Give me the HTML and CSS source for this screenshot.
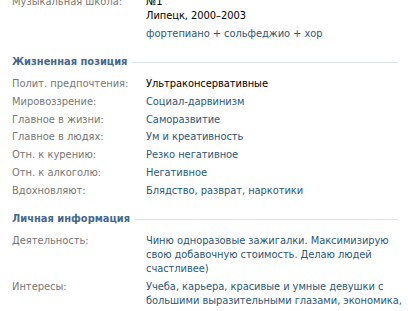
FILE: index.html
```html
<!DOCTYPE html>
<html lang="ru">
<head>
  <meta charset="UTF-8" />
  <title>Профиль</title>
  <link rel="stylesheet" href="styles.css">
</head>
<body>
  <div class="profile-info">

    <div class="info-row first">
      <div class="label">Музыкальная школа:</div>
      <div class="value">
        <div class="plain">№1</div>
        <div class="plain">Липецк, 2000–2003</div>
      </div>
    </div>
    <div class="info-row">
      <div class="label"></div>
      <div class="value"><a href="#">фортепиано + сольфеджио + хор</a></div>
    </div>

    <h3 class="section-title"><span>Жизненная позиция</span></h3>

    <div class="info-row">
      <div class="label">Полит. предпочтения:</div>
      <div class="value plain">Ультраконсервативные</div>
    </div>
    <div class="info-row">
      <div class="label">Мировоззрение:</div>
      <div class="value"><a href="#">Социал-дарвинизм</a></div>
    </div>
    <div class="info-row">
      <div class="label">Главное в жизни:</div>
      <div class="value"><a href="#">Саморазвитие</a></div>
    </div>
    <div class="info-row">
      <div class="label">Главное в людях:</div>
      <div class="value"><a href="#">Ум и креативность</a></div>
    </div>
    <div class="info-row">
      <div class="label">Отн. к курению:</div>
      <div class="value"><a href="#">Резко негативное</a></div>
    </div>
    <div class="info-row">
      <div class="label">Отн. к алкоголю:</div>
      <div class="value"><a href="#">Негативное</a></div>
    </div>
    <div class="info-row">
      <div class="label">Вдохновляют:</div>
      <div class="value"><a href="#">Блядство, разврат, наркотики</a></div>
    </div>

    <h3 class="section-title"><span>Личная информация</span></h3>

    <div class="info-row">
      <div class="label">Деятельность:</div>
      <div class="value"><a href="#">Чиню одноразовые зажигалки. Максимизирую свою добавочную стоимость. Делаю людей счастливее)</a></div>
    </div>
    <div class="info-row">
      <div class="label">Интересы:</div>
      <div class="value"><a href="#">Учеба, карьера, красивые и умные девушки с большими выразительными глазами, экономика, политика</a></div>
    </div>

  </div>
</body>
</html>
```

FILE: styles.css
```css
body {
  margin: 0;
  background-color: #fff;
  font-family: 'DejaVu Sans Condensed', 'DejaVu Sans', sans-serif;
  font-stretch: condensed;
  font-size: 11px;
  color: #000;
}

.profile-info {
  padding: 0 0 0 12px;
  margin-top: -7px;
}

.info-row {
  display: flex;
  line-height: 14px;
  padding: 2px 0 1.7px;
}

.label {
  width: 134px;
  flex-shrink: 0;
  color: #777;
}

.value {
  flex: 1;
  letter-spacing: -0.05px;
}

.value a {
  color: #2b587a;
  text-decoration: none;
}

.plain {
  color: #000;
}

.section-title {
  display: flex;
  align-items: center;
  margin: 13px 10px 6px 0;
  font-size: 11px;
  line-height: 14px;
  font-weight: bold;
  color: #45688e;
}

.section-title::after {
  content: "";
  flex: 1;
  height: 1px;
  margin-left: 5px;
  background-color: #dde3e9;
}
```
